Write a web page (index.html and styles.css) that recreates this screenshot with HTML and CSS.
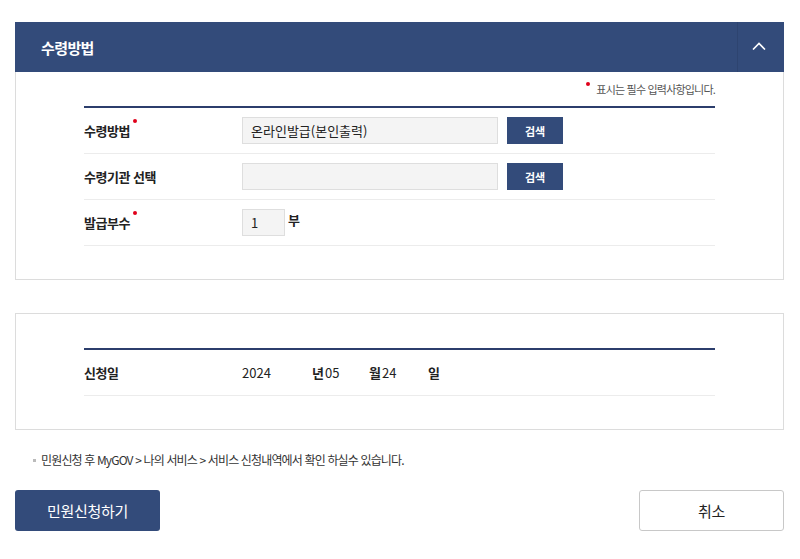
FILE: index.html
```html
<!DOCTYPE html>
<html lang="ko">
<head>
<meta charset="utf-8">
<link rel="stylesheet" href="styles.css">
</head>
<body>
<div class="page">
  <section class="card">
    <div class="card-head">
      <h2 class="card-title">수령방법</h2>
      <button class="toggle" type="button" aria-label="접기">
        <svg width="14" height="8" viewBox="0 0 14 8"><polyline points="1,7.5 7,1.5 13,7.5" fill="none" stroke="#fff" stroke-width="1.6"/></svg>
      </button>
    </div>
    <div class="card-body">
      <p class="req-note"><span class="dot"></span>표시는 필수 입력사항입니다.</p>
      <div class="table">
        <div class="row">
          <div class="label req">수령방법</div>
          <div class="field">
            <div class="input wide">온라인발급(본인출력)</div>
            <button class="btn-search" type="button">검색</button>
          </div>
        </div>
        <div class="row">
          <div class="label">수령기관 선택</div>
          <div class="field">
            <div class="input wide"></div>
            <button class="btn-search" type="button">검색</button>
          </div>
        </div>
        <div class="row">
          <div class="label req">발급부수</div>
          <div class="field">
            <div class="input small">1</div>
            <span class="unit">부</span>
          </div>
        </div>
      </div>
    </div>
  </section>

  <section class="card card-plain">
    <div class="table">
      <div class="row">
        <div class="label">신청일</div>
        <div class="field date">
          <span class="dv y">2024</span><span class="du">년</span><span class="dv m">05</span><span class="du">월</span><span class="dv d">24</span><span class="du">일</span>
        </div>
      </div>
    </div>
  </section>

  <p class="info">민원신청 후 MyGOV &gt; 나의 서비스 &gt; 서비스 신청내역에서 확인 하실수 있습니다.</p>

  <div class="actions">
    <button class="btn-primary" type="button">민원신청하기</button>
    <button class="btn-cancel" type="button">취소</button>
  </div>
</div>
</body>
</html>
```

FILE: styles.css
```css
* { box-sizing: border-box; }
html, body { margin: 0; padding: 0; background: #fff; }
body {
  font-family: "Noto Sans CJK KR", "Noto Sans", sans-serif;
  color: #222;
  font-size: 13px;
}
.page {
  width: 769px;
  margin-left: 15px;
  padding-top: 22px;
}
.card {
  border: 1px solid #dcdcdc;
}
.card-head {
  height: 50px;
  background: #334b7a;
  display: flex;
  align-items: center;
  justify-content: space-between;
  margin: -1px -1px 0 -1px;
}
.card-title {
  margin: 0 0 0 26px;
  color: #fff;
  font-size: 15px;
  font-weight: 700;
  letter-spacing: -0.6px;
}
.toggle {
  width: 47px;
  height: 50px;
  border: 0;
  border-left: 1px solid #2e4470;
  background: transparent;
  display: flex;
  align-items: center;
  justify-content: center;
  padding: 0 4px 2px 0;
}
.card-body {
  padding: 7px 68px 33px;
}
.req-note {
  margin: 0 0 7px;
  text-align: right;
  font-size: 11px;
  line-height: 20px;
  color: #555;
  letter-spacing: -0.8px;
}
.dot {
  display: inline-block;
  width: 4px;
  height: 4px;
  border-radius: 50%;
  background: #e0001a;
  vertical-align: top;
  margin: 3px 6px 0 0;
}
.table {
  border-top: 2px solid #2c3e6c;
}
.row {
  display: flex;
  align-items: center;
  height: 46px;
  border-bottom: 1px solid #ececec;
}
.label {
  width: 158px;
  flex: none;
  font-weight: 700;
  font-size: 13px;
  letter-spacing: -0.5px;
  color: #222;
}
.label.req { display: flex; }
.label.req::after {
  content: "";
  position: relative;
  width: 4px;
  height: 4px;
  border-radius: 50%;
  background: #e0001a;
  top: -2px;
  margin-left: 3px;
}
.field {
  display: flex;
  align-items: center;
}
.input {
  height: 27px;
  background: #f4f4f4;
  border: 1px solid #dedede;
  font-size: 13px;
  line-height: 25px;
  padding: 0 8px;
  color: #222;
}
.input.wide { width: 256px; }
.input.small { width: 43px; }
.btn-search {
  margin-left: 9px;
  width: 56px;
  height: 27px;
  border: 0;
  background: #334b7a;
  color: #fff;
  font-family: inherit;
  font-size: 11px;
  font-weight: 700;
  padding: 0;
}
.unit {
  margin-left: 3px;
  font-weight: 700;
  font-size: 13px;
  position: relative;
  top: -3px;
}
.card-plain {
  margin-top: 33px;
  padding: 34px 68px 33px;
}
.date .dv { font-size: 13px; color: #222; }
.date .du { font-weight: 700; font-size: 13px; }
.date .y { width: 70px; display: inline-block; }
.date .m { width: 44px; display: inline-block; margin-left: 1px; }
.date .d { width: 46px; display: inline-block; margin-left: 1px; }
.info {
  margin: 21px 0 0 18px;
  font-size: 12px;
  line-height: 18px;
  color: #333;
  letter-spacing: -0.85px;
  display: flex;
  align-items: center;
}
.info::before {
  content: "";
  width: 3px;
  height: 3px;
  background: #bbb;
  margin-right: 5px;
}
.actions {
  margin-top: 21px;
  display: flex;
  justify-content: space-between;
}
.btn-primary, .btn-cancel {
  width: 145px;
  height: 41px;
  border-radius: 3px;
  font-family: inherit;
  font-size: 15px;
  padding: 0;
  letter-spacing: -0.3px;
}
.btn-primary {
  background: #334b7a;
  color: #fff;
  border: 0;
}
.btn-cancel {
  background: #fff;
  color: #222;
  border: 1px solid #c8c8c8;
}
```
